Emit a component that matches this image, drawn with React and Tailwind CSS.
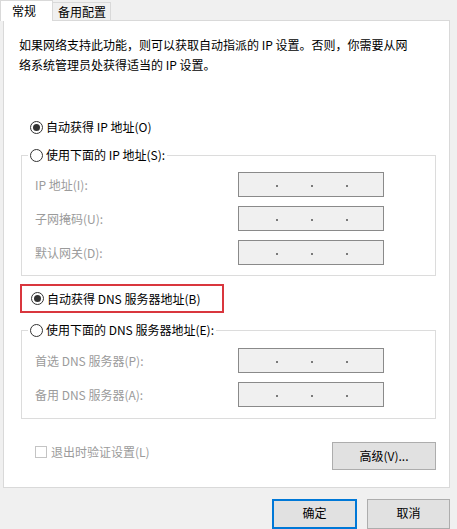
const font = { fontFamily: '"Noto Sans CJK SC", "Microsoft YaHei", sans-serif' };

function Radio({ checked }) {
  return (
    <span className="flex h-[13px] w-[13px] shrink-0 items-center justify-center rounded-full border border-[#333333] bg-white">
      {checked && <span className="h-[7px] w-[7px] rounded-full bg-[#333333]" />}
    </span>
  );
}

function RadioRow({ checked, label }) {
  return (
    <div className="flex h-[20px] items-center gap-[3px] text-[12px] text-black">
      <Radio checked={checked} />
      <span>{label}</span>
    </div>
  );
}

function IpField() {
  return (
    <div className="flex h-[25px] w-[146px] items-center gap-[33px] border border-[#8a8a8a] bg-[#f0f0f0] pl-[37px] pt-[3px]">
      <span className="h-[2px] w-[2px] bg-[#7a7a7a]" />
      <span className="h-[2px] w-[2px] bg-[#7a7a7a]" />
      <span className="h-[2px] w-[2px] bg-[#7a7a7a]" />
    </div>
  );
}

function FieldRow({ label }) {
  return (
    <div className="flex h-[25px] items-center">
      <span className="w-[210px] pl-[7px] text-[12px] text-[#9b9b9b]">{label}</span>
      <IpField />
    </div>
  );
}

export default function App() {
  return (
    <div className="h-[529px] w-[457px] overflow-hidden bg-[#f0f0f0]" style={font}>
      <div className="flex h-[20px] items-end">
        <div className="relative z-10 -mb-px flex h-[21px] w-[53px] items-center border-l border-r border-t border-[#d9d9d9] bg-white pl-[11px] text-[12px] text-black">
          常规
        </div>
        <div className="flex h-[18px] w-[58px] items-center border border-b-0 border-l-0 border-[#d9d9d9] bg-[#f0f0f0] pl-[5px] text-[12px] text-black">
          备用配置
        </div>
      </div>

      <div className="ml-[3px] flex h-[468px] w-[447px] flex-col border border-[#d9d9d9] bg-white">
        <p className="mt-[14px] pl-[15px] text-[12px] leading-[20px] text-black">
          如果网络支持此功能，则可以获取自动指派的 IP 设置。否则，你需要从网
          <br />
          络系统管理员处获得适当的 IP 设置。
        </p>

        <div className="ml-[26px] mt-[42px]">
          <RadioRow checked label="自动获得 IP 地址(O)" />
        </div>

        <fieldset className="ml-[17px] mt-[8px] w-[415px] border border-[#dcdcdc] pb-[10px] pl-[6px]">
          <legend className="px-[2px]">
            <RadioRow label="使用下面的 IP 地址(S):" />
          </legend>
          <div className="mt-[7px] flex flex-col gap-[9px]">
            <FieldRow label="IP 地址(I):" />
            <FieldRow label="子网掩码(U):" />
            <FieldRow label="默认网关(D):" />
          </div>
        </fieldset>

        <div className="ml-[16px] mt-[8px] flex h-[29px] w-[204px] items-center border-2 border-[#d9363e] pl-[9px]">
          <RadioRow checked label="自动获得 DNS 服务器地址(B)" />
        </div>

        <fieldset className="ml-[17px] mt-[7px] w-[415px] border border-[#dcdcdc] pb-[11px] pl-[6px]">
          <legend className="px-[2px]">
            <RadioRow label="使用下面的 DNS 服务器地址(E):" />
          </legend>
          <div className="mt-[8px] flex flex-col gap-[9px]">
            <FieldRow label="首选 DNS 服务器(P):" />
            <FieldRow label="备用 DNS 服务器(A):" />
          </div>
        </fieldset>

        <div className="ml-[31px] mt-[23px] flex w-[401px] items-start justify-between">
          <div className="flex h-[20px] items-center gap-[4px] text-[12px] text-[#9b9b9b]">
            <span className="h-[12px] w-[12px] border border-[#c4c4c4] bg-white" />
            <span>退出时验证设置(L)</span>
          </div>
          <button className="flex h-[28px] w-[104px] items-center justify-center border border-[#adadad] bg-[#e1e1e1] text-[12px] text-black">
            高级(V)...
          </button>
        </div>
      </div>

      <div className="mt-[11px] flex justify-end gap-[10px] pr-[7px]">
        <button className="flex h-[30px] w-[85px] items-center justify-center border-2 border-[#0078d7] bg-[#e1e1e1] pb-[2px] text-[12px] text-black">
          确定
        </button>
        <button className="flex h-[30px] w-[83px] items-center justify-center border border-[#adadad] bg-[#e1e1e1] pb-[2px] text-[12px] text-black">
          取消
        </button>
      </div>
    </div>
  );
}
